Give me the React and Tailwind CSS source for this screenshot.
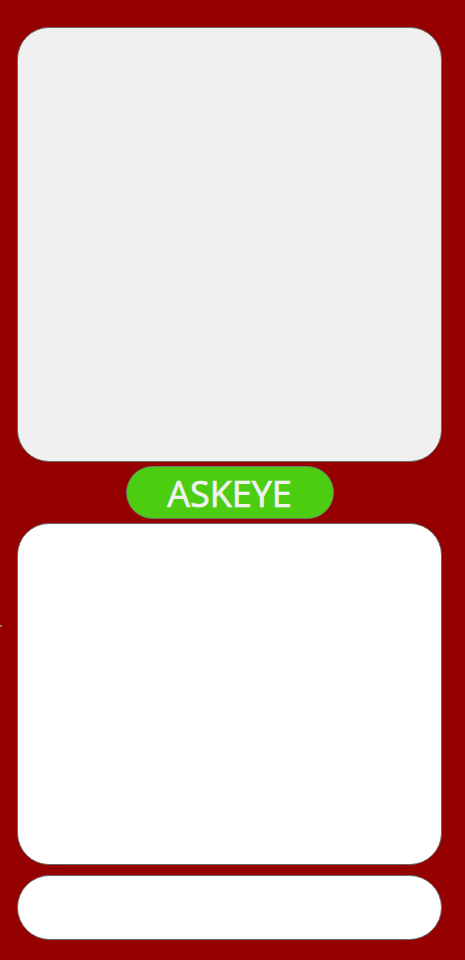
export default function App() {
  return (
    <div className="relative w-[465px] h-[960px] bg-[#950000] flex flex-col items-stretch pl-[17px] pr-[23px] pt-[27px]">
      <div className="h-[435px] rounded-[32px] border border-[#6b6b6b] bg-[#f0f0f0]" />
      <div className="flex justify-center mt-[4px]">
        <div className="w-[208px] h-[53px] rounded-full border border-[#6b7a6b] bg-[#4ccd12] flex items-center justify-center">
          <span className="text-[36px] leading-none font-normal text-[#f2f2f2] font-['Open_Sans',sans-serif] tracking-[0px] mt-[2px] [-webkit-text-stroke:0.7px_#f2f2f2]">ASKEYE</span>
        </div>
      </div>
      <div className="mt-[4px] h-[342px] rounded-[32px] border border-[#6b6b6b] bg-white" />
      <div className="mt-[10px] h-[65px] rounded-full border border-[#6b6b6b] bg-white" />
      <div className="absolute left-0 top-[625px] w-[2px] h-[2px] bg-[#8a8a8a]" />
    </div>
  );
}
